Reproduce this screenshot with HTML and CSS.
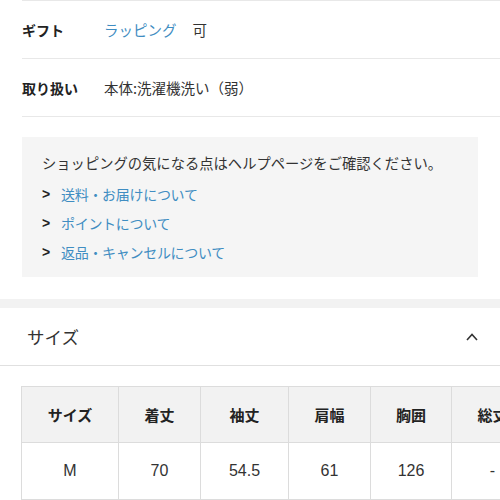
FILE: index.html
```html
<!DOCTYPE html>
<html lang="ja">
<head>
<meta charset="utf-8">
<link rel="stylesheet" href="styles.css">
</head>
<body>
<div class="spec">
  <div class="row">
    <div class="label">ギフト</div>
    <div class="value"><span class="link">ラッピング</span><span class="ok">可</span></div>
  </div>
  <div class="row">
    <div class="label">取り扱い</div>
    <div class="value">本体:洗濯機洗い（弱）</div>
  </div>
</div>
<div class="help">
  <p class="intro">ショッピングの気になる点はヘルプページをご確認ください。</p>
  <div class="item"><span class="arrow">&gt;</span><span class="link">送料・お届けについて</span></div>
  <div class="item"><span class="arrow">&gt;</span><span class="link">ポイントについて</span></div>
  <div class="item"><span class="arrow">&gt;</span><span class="link">返品・キャンセルについて</span></div>
</div>
<div class="band"></div>
<div class="acc">
  <div class="acc-title">サイズ</div>
  <svg class="chev" width="12" height="8" viewBox="0 0 12 8"><path d="M1 7 L6 1.5 L11 7" fill="none" stroke="#333" stroke-width="1.6"/></svg>
</div>
<div class="tablewrap">
  <table class="size">
    <colgroup>
      <col class="c1"><col class="c2"><col class="c3"><col class="c4"><col class="c5"><col class="c6">
    </colgroup>
    <tr class="head"><th>サイズ</th><th>着丈</th><th>袖丈</th><th>肩幅</th><th>胸囲</th><th>総丈</th></tr>
    <tr class="body"><td>M</td><td>70</td><td>54.5</td><td>61</td><td>126</td><td>-</td></tr>
  </table>
</div>
</body>
</html>
```
FILE: styles.css
```css
html, body { margin: 0; padding: 0; background: #fff; }
body {
  width: 500px;
  height: 500px;
  overflow: hidden;
  font-family: "Noto Sans CJK JP", "Noto Sans", sans-serif;
  color: #222;
  font-size: 14px;
}
.spec { margin-left: 22px; border-top: 1px solid #e8e8e8; }
.row {
  display: flex;
  align-items: center;
  height: 57px;
  border-bottom: 1px solid #e8e8e8;
}
.label { width: 82px; font-weight: bold; color: #222; }
.value { color: #333; font-size: 14.5px; }
.link { color: #3f8dc2; }
.ok { margin-left: 16px; }
.help {
  margin: 20px 0 0 22px;
  width: 416px;
  height: 119px;
  padding: 11px 20px 10px 20px;
  background: #f5f5f5;
}
.intro { margin: 0 0 3px 0; line-height: 29px; color: #333; font-size: 14.3px; }
.item { line-height: 29px; display: flex; }
.arrow { width: 19px; color: #222; font-family: "Liberation Sans", sans-serif; font-weight: bold; }
.item .link { letter-spacing: -0.3px; }
.band { margin-top: 22px; height: 9px; background: #f2f2f2; }
.acc {
  display: flex;
  align-items: center;
  justify-content: space-between;
  height: 57px;
  padding: 0 22px 0 27px;
  border-bottom: 1px solid #e0e0e0;
}
.acc-title { font-size: 17.5px; color: #333; }
.chev { display: block; }
.tablewrap { margin: 20px 0 0 21px; }
.size {
  border-collapse: collapse;
  table-layout: fixed;
  width: 512px;
  font-size: 15px;
}
.size th, .size td { border: 1px solid #dcdcdc; text-align: center; padding: 0; }
.head th { height: 55px; background: #f2f2f2; font-weight: bold; font-size: 15px; color: #222; }
.body td { height: 56px; color: #333; font-family: "Liberation Sans", "Noto Sans CJK JP", sans-serif; font-size: 16px; }
.c1 { width: 97px; }
.c2 { width: 82px; }
.c3 { width: 88px; }
.c4 { width: 82px; }
.c5 { width: 81px; }
.c6 { width: 82px; }
```
